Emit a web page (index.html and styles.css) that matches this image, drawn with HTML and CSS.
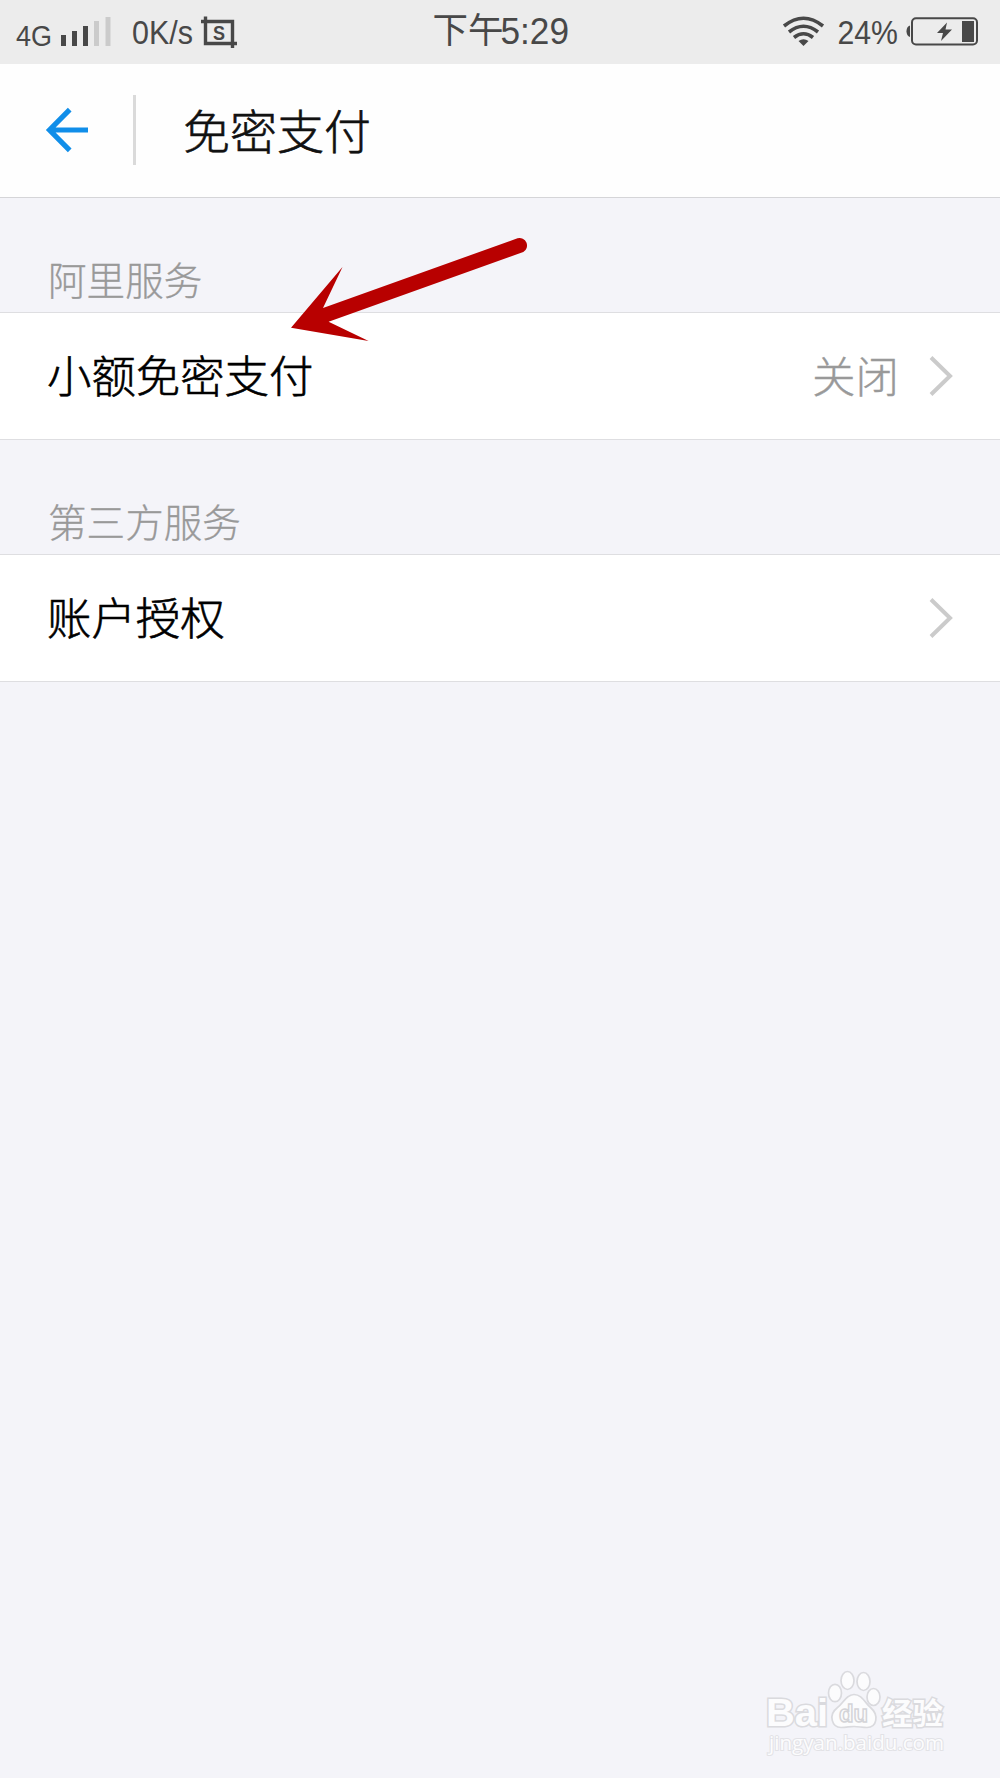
FILE: index.html
```html
<!DOCTYPE html>
<html lang="zh-CN">
<head>
<meta charset="utf-8">
<title>免密支付</title>
<link rel="stylesheet" href="styles.css">
</head>
<body>
<div class="screen">
  <header class="status">
    <svg class="status-left" width="260" height="64" viewBox="0 0 260 64">
      <text x="16" y="45.8" font-size="30" textLength="36" lengthAdjust="spacingAndGlyphs">4G</text>
      <path d="M61 35h5v11h-5zM72 31h5v15h-5zM83 26h5v20h-5z"/>
      <path class="faint" d="M94 21h5v25h-5zM105.500 17h5v29h-5z"/>
      <text x="132" y="43.800" font-size="32.500" textLength="61" lengthAdjust="spacingAndGlyphs">0K/s</text>
      <path class="line" d="M205.500 16.500V43.500H237M201 21.500H232.500V48" stroke-width="3.400"/>
      <text class="bold" x="213" y="39.500" font-size="20" textLength="12" lengthAdjust="spacingAndGlyphs">S</text>
    </svg>
    <svg class="status-time" width="160" height="64" viewBox="0 0 160 64">
      <text x="12.500" y="42.800" font-size="35.500">下午</text>
      <text x="80.500" y="44.300" font-size="37.500" textLength="68.500" lengthAdjust="spacingAndGlyphs">5:29</text>
    </svg>
    <svg class="status-right" width="230" height="64" viewBox="0 0 230 64">
      <g class="line" stroke-width="3.600">
        <path d="M14 26Q33.500 10.500 53 26"/>
        <path d="M19 32Q33.500 20.500 48 32"/>
        <path d="M24 37.500Q33.500 30 43 37.500"/>
      </g>
      <path d="M28.500 41Q33.500 37.500 38.500 41L33.500 46z"/>
      <text x="67.500" y="44" font-size="32.500" textLength="60.500" lengthAdjust="spacingAndGlyphs">24%</text>
      <path d="M140 25.500v11.500q-3.500-1-3.500-5.700t3.500-5.800z"/>
      <rect class="line" x="142" y="18.200" width="65" height="26.200" rx="4" stroke-width="2"/>
      <path d="M192 21h12v21h-12z"/>
      <path d="M177 22.500L167 33h6l-2 8 11-11.500h-6.500z"/>
    </svg>
  </header>
  <nav class="titlebar">
    <svg class="back" width="46" height="46" viewBox="0 0 46 46"><path d="M25.700 2.700L5.500 23L25.700 43.300M6 23H44" fill="none" stroke="#108ee9" stroke-width="5.200"/></svg>
    <span class="divider"></span>
    <h1 class="title">免密支付</h1>
  </nav>
  <main>
    <h2 class="label">阿里服务</h2>
    <div class="row">
      <span class="name">小额免密支付</span>
      <span class="value">关闭</span>
      <svg class="chevron" width="26" height="42" viewBox="0 0 26 42"><path d="M2 2.500L21 21L2 39.500"/></svg>
    </div>
    <h2 class="label">第三方服务</h2>
    <div class="row">
      <span class="name">账户授权</span>
      <svg class="chevron" width="26" height="42" viewBox="0 0 26 42"><path d="M2 2.500L21 21L2 39.500"/></svg>
    </div>
  </main>
  <svg class="pointer" width="240" height="106" viewBox="290 238 240 106">
    <path d="M291 327.700L342.500 267L323 308L517.500 238.300A7.500 7.500 0 0 1 523.300 252L328.600 321.700L368.600 341z" fill="#b80000"/>
  </svg>
  <svg class="watermark" width="200" height="92" viewBox="760 1666 200 92">
    <g fill="#fcfcfd" stroke="#dadade" stroke-width="1.700">
      <ellipse cx="835" cy="1693" rx="6.500" ry="8.700"/>
      <ellipse cx="847.500" cy="1680.500" rx="6.500" ry="9"/>
      <ellipse cx="863.500" cy="1681.500" rx="6.500" ry="9"/>
      <ellipse cx="873.500" cy="1697" rx="6.500" ry="8.500"/>
      <path d="M854 1694.500C846 1694.500 843 1704 837 1708C828 1715 832 1727.500 841 1727.500C847 1727.500 849 1726.500 854 1726.500S862 1727.500 867 1727.500C877 1727.500 879 1715 871 1708C865 1703 862 1694.500 854 1694.500z"/>
    </g>
    <g class="mark">
      <text class="heavy" x="766" y="1726" font-size="38" textLength="62" lengthAdjust="spacingAndGlyphs">Bai</text>
      <text class="heavy cjk" x="882" y="1723.500" font-size="30" textLength="61" lengthAdjust="spacingAndGlyphs">经验</text>
      <text x="769" y="1750" font-size="20" textLength="175" lengthAdjust="spacingAndGlyphs" class="url">jingyan.baidu.com</text>
    </g>
    <text class="du" x="839" y="1722" font-size="24" textLength="29" lengthAdjust="spacingAndGlyphs">du</text>
  </svg>
</div>
</body>
</html>
```
FILE: styles.css
```css
* { box-sizing: border-box; }
body {
  margin: 0;
  background: #f4f4f9;
  font-family: "Noto Sans CJK SC", sans-serif;
  font-weight: 300;
}
.screen {
  position: relative;
  width: 1000px;
  height: 1778px;
  overflow: hidden;
}
.status {
  display: grid;
  grid-template-columns: 420px 1fr 230px;
  height: 64px;
  background: #ececec;
}
.status svg {
  fill: #484848;
  font-family: "Liberation Sans", "Noto Sans CJK SC", sans-serif;
  font-weight: 400;
}
.status .faint { fill: #cbcbcb; }
.status .line { fill: none; stroke: #484848; }
.status .bold { font-weight: 700; }
.titlebar {
  display: flex;
  align-items: flex-start;
  height: 134px;
  padding: 0 44px;
  background: #fefefe;
  border-bottom: 1px solid #d5d5d8;
}
.back { margin-top: 43px; }
.divider {
  width: 3px;
  height: 70px;
  margin: 31px 0 0 43px;
  background: #dadada;
}
.title {
  margin: 30px 0 0 47px;
  font-size: 47px;
  line-height: 70px;
  font-weight: 300;
  color: #111;
  -webkit-text-stroke: 0.6px #111;
}
.label {
  display: flex;
  align-items: flex-end;
  height: 114px;
  margin: 0;
  padding: 0 48px 6px;
  font-size: 38.6px;
  line-height: 56px;
  font-weight: 300;
  color: #999;
  -webkit-text-stroke: 0.3px #999;
}
.row {
  display: flex;
  align-items: center;
  height: 128px;
  padding: 0 45px 0 47px;
  background: #fff;
  border: solid #dedee1;
  border-width: 1px 0;
  font-size: 44.4px;
  line-height: 64px;
  color: #000;
}
.name {
  flex: 1;
  padding-bottom: 4px;
  -webkit-text-stroke: 0.6px #000;
}
.value {
  margin-right: 30px;
  padding-bottom: 3px;
  font-size: 43.5px;
  color: #999;
  -webkit-text-stroke: 0.4px #999;
}
.chevron { fill: none; stroke: #cbcbcb; stroke-width: 4; }
.pointer {
  position: absolute;
  left: 290px;
  top: 238px;
}
.watermark {
  position: absolute;
  left: 760px;
  top: 1666px;
}
.mark {
  fill: #fcfcfd;
  stroke: #dadade;
  stroke-width: 3px;
  paint-order: stroke;
  font-family: "Liberation Sans", sans-serif;
}
.mark .heavy { font-weight: 700; }
.mark .cjk { font-family: "Noto Sans CJK SC", sans-serif; font-weight: 700; }
.mark .url {
  font-family: "Open Sans", sans-serif;
  font-weight: 400;
  stroke: #e2e2e6;
  stroke-width: 2px;
}
.du {
  fill: #fcfcfd;
  stroke: #d4d4d8;
  stroke-width: 1.5px;
  font-family: "Liberation Sans", sans-serif;
  font-weight: 700;
}
```
